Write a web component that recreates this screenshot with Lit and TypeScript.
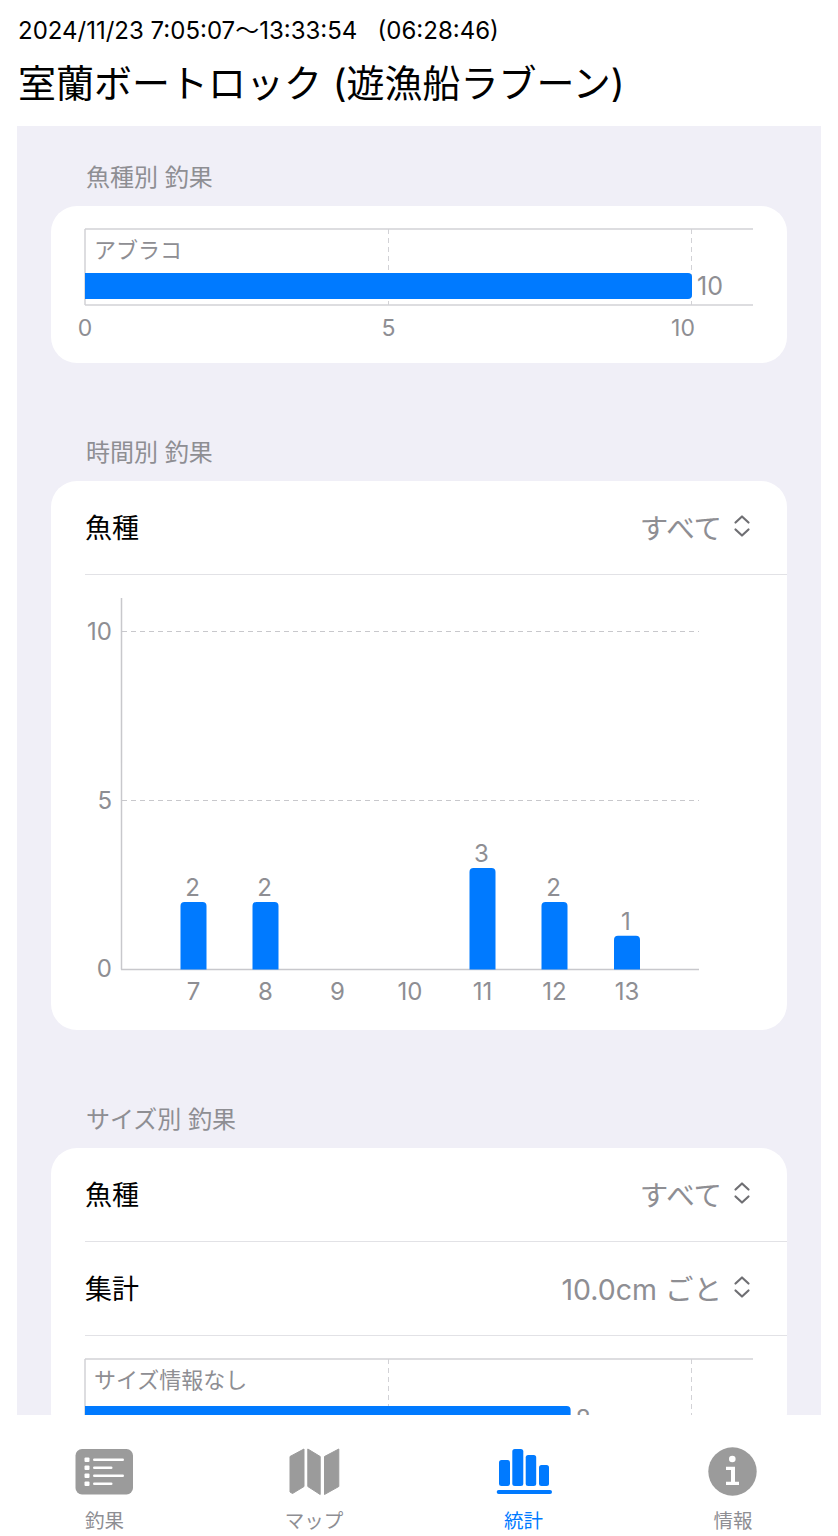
import {LitElement, css, html, svg} from 'lit';
import {customElement} from 'lit/decorators.js';

const BLUE = '#007aff';

const hourBars = [
    {label: '7', x: 142.5, value: 2},
    {label: '8', x: 214.5, value: 2},
    {label: '9', x: 286.5, value: 0},
    {label: '10', x: 359, value: 0},
    {label: '11', x: 431.5, value: 3},
    {label: '12', x: 503.5, value: 2},
    {label: '13', x: 576, value: 1},
];

const chevrons = html`
    <svg width="18" height="26" viewBox="0 0 18 26" fill="none" stroke="#6f6f73" stroke-width="2.2"
         stroke-linecap="round" stroke-linejoin="round">
        <path d="M2.5 9.5 9 3.5l6.5 6"/>
        <path d="M2.5 16.5 9 22.5l6.5-6"/>
    </svg>`;

@customElement('hbar-chart')
export class HBarChart extends LitElement {
    static properties = {
        label: {type: String},
        value: {type: Number},
        barTop: {type: Number},
        axis: {type: Boolean},
    };

    declare label: string;
    declare value: number;
    declare barTop: number;
    declare axis: boolean;

    static styles = css`
        :host {
            display: block;
        }

        svg {
            display: block;
        }

        text {
            font-family: Inter, "Noto Sans CJK JP", sans-serif;
            font-size: 22px;
            fill: #8e8e93;
        }

        text.val {
            font-size: 25px;
        }

        text.tick {
            font-size: 23px;
        }
    `;

    constructor() {
        super();
        this.barTop = 45;
        this.axis = false;
    }

    render() {
        const top = this.barTop;
        const bottom = top + 32;
        const end = 34 + this.value * 60.7;
        return html`
            <svg width="736" height="${bottom + (this.axis ? 57 : 0)}">
                <path d="M34 1H702M34 ${bottom}H702M34 1V${bottom}" stroke="#d2d2d6" stroke-width="1.5" fill="none"/>
                <path d="M337.5 1V${bottom}M640.5 1V${bottom}" stroke="#d2d2d6" stroke-dasharray="5 4"/>
                <text x="43" y="30">${this.label}</text>
                <path d="M34 ${top}H${end - 4}a4 4 0 0 1 4 4V${top + 22}a4 4 0 0 1-4 4H34Z" fill="${BLUE}"/>
                <text class="val" x="${end + 5}" y="${top + 22}">${this.value}</text>
                ${this.axis
                    ? svg`
                        <text class="tick" x="34" y="108" text-anchor="middle">0</text>
                        <text class="tick" x="337.5" y="108" text-anchor="middle">5</text>
                        <text class="tick" x="632" y="108" text-anchor="middle">10</text>`
                    : ''}
            </svg>`;
    }
}

@customElement('app-root')
export class AppRoot extends LitElement {
    static styles = css`
        :host {
            display: block;
            font-family: Inter, "Noto Sans CJK JP", sans-serif;
            background: #fff;
            color: #000;
        }

        .page {
            display: flex;
            flex-direction: column;
            height: 1536px;
            overflow: hidden;
        }

        .head {
            flex: none;
            height: 126px;
            padding: 17px 18px 0;
            box-sizing: border-box;
        }

        .date {
            font-size: 24px;
            line-height: 28px;
            white-space: pre;
        }

        .title {
            font-size: 38px;
            line-height: 50px;
            margin-top: 13px;
            white-space: nowrap;
        }

        .panel {
            flex: 1;
            min-height: 0;
            overflow: hidden;
            margin: 0 17px;
            padding: 37px 34px 0;
            background: #f0eff7;
        }

        .section-title {
            font-size: 24px;
            line-height: 30px;
            color: #8e8e93;
            padding-left: 35px;
        }

        .card {
            background: #fff;
            border-radius: 26px;
            margin-top: 13px;
            margin-bottom: 75px;
            overflow: hidden;
        }

        .first {
            height: 157px;
            padding-top: 22px;
            box-sizing: border-box;
        }

        .row {
            display: flex;
            align-items: center;
            justify-content: space-between;
            height: 94px;
            box-sizing: border-box;
            margin-left: 34px;
            padding: 0 36px 3px 0;
            font-size: 27px;
            border-bottom: 1.5px solid #e2e2e6;
        }

        .value {
            display: flex;
            align-items: center;
            gap: 11px;
            font-size: 28.5px;
            color: #8e8e93;
        }

        .chart {
            display: block;
        }

        .chart text {
            font-family: Inter, sans-serif;
            font-size: 24px;
            fill: #8e8e93;
        }

        .size-chart {
            padding-top: 22px;
        }

        .tabbar {
            flex: none;
            height: 121px;
            display: grid;
            grid-template-columns: 209px 210px 209px 210px;
            background: #fff;
        }

        .tab {
            display: flex;
            flex-direction: column;
            align-items: center;
            padding-top: 32px;
            font-size: 19.5px;
            color: #8e8e93;
        }

        .tab.active {
            color: #007aff;
        }

        .tab svg {
            display: block;
        }

        .tab span {
            margin-top: 10px;
            line-height: 24px;
        }
    `;

    renderHourChart() {
        const unit = 33.8;
        const base = 394.5;
        return html`
            <svg class="chart" width="736" height="455">
                <path d="M70.5 23V${base}M70 ${base}H648" stroke="#c8c8cc" stroke-width="1.5" fill="none"/>
                <path d="M71 56.5H648M71 225.5H648" stroke="#c8c8cc" stroke-dasharray="5 4"/>
                <text x="61" y="65" text-anchor="end">10</text>
                <text x="61" y="234" text-anchor="end">5</text>
                <text x="61" y="402" text-anchor="end">0</text>
                ${hourBars.map((b) => {
                    const h = b.value * unit;
                    return svg`
                        ${b.value
                            ? svg`<path d="M${b.x - 13} ${base}V${base - h + 4}a4 4 0 0 1 4-4h18a4 4 0 0 1 4 4V${base}Z" fill="${BLUE}"/>
                                  <text x="${b.x - 1}" y="${base - h - 6}" text-anchor="middle">${b.value}</text>`
                            : ''}
                        <text x="${b.x}" y="425" text-anchor="middle">${b.label}</text>`;
                })}
            </svg>`;
    }

    renderTabs() {
        return html`
            <nav class="tabbar">
                <div class="tab">
                    <svg width="60" height="52" viewBox="0 0 60 52">
                        <rect x="0.5" y="2" width="57.5" height="45.5" rx="6.5" fill="#9b9b9b"/>
                        <g fill="#fff">
                            <rect x="9.5" y="10.5" width="5" height="4.5" rx="1"/>
                            <rect x="9.5" y="18.5" width="5" height="4.5" rx="1"/>
                            <rect x="9.5" y="26.5" width="5" height="4.5" rx="1"/>
                            <rect x="9.5" y="34.5" width="5" height="4.5" rx="1"/>
                            <rect x="18" y="11.5" width="31" height="2.6" rx="1.3"/>
                            <rect x="18" y="19.5" width="19.5" height="2.6" rx="1.3"/>
                            <rect x="18" y="27.5" width="31" height="2.6" rx="1.3"/>
                            <rect x="18" y="35.5" width="19.5" height="2.6" rx="1.3"/>
                        </g>
                    </svg>
                    <span>釣果</span>
                </div>
                <div class="tab">
                    <svg width="52" height="52" viewBox="0 0 52 52" fill="#9b9b9b" stroke="#9b9b9b" stroke-width="1"
                         stroke-linejoin="round">
                        <path d="M2 9.5 16 2v37.5L4.5 46.5 2 45Z"/>
                        <path d="M19.8 2 32.2 9.5v38l-12.4-8Z"/>
                        <path d="M36.5 9.5 50.8 2v37.5L36.5 47.5Z"/>
                    </svg>
                    <span>マップ</span>
                </div>
                <div class="tab active">
                    <svg width="58" height="52" viewBox="0 0 58 52" fill="${BLUE}">
                        <rect x="4" y="13" width="11" height="26" rx="2.5"/>
                        <rect x="17.3" y="2" width="11" height="37" rx="2.5"/>
                        <rect x="30.7" y="8" width="10.5" height="31" rx="2.5"/>
                        <rect x="44" y="18" width="10" height="21" rx="2.5"/>
                        <rect x="1.7" y="43" width="55.3" height="4" rx="2"/>
                    </svg>
                    <span>統計</span>
                </div>
                <div class="tab">
                    <svg width="52" height="52" viewBox="0 0 52 52">
                        <circle cx="25.5" cy="24.5" r="24.2" fill="#9b9b9b"/>
                        <circle cx="25.3" cy="12" r="3.3" fill="#fff"/>
                        <path d="M19 19.7H28V34.7H32V38H19V34.7H24V23H19Z" fill="#fff"/>
                    </svg>
                    <span>情報</span>
                </div>
            </nav>`;
    }

    render() {
        return html`
            <div class="page">
                <header class="head">
                    <div class="date">2024/11/23 7:05:07～13:33:54   (06:28:46)</div>
                    <div class="title">室蘭ボートロック (遊漁船ラブーン)</div>
                </header>
                <main class="panel">
                    <div class="section-title">魚種別 釣果</div>
                    <section class="card first">
                        <hbar-chart label="アブラコ" .value=${10} axis></hbar-chart>
                    </section>

                    <div class="section-title">時間別 釣果</div>
                    <section class="card">
                        <div class="row"><span>魚種</span><span class="value">すべて ${chevrons}</span></div>
                        ${this.renderHourChart()}
                    </section>

                    <div class="section-title">サイズ別 釣果</div>
                    <section class="card">
                        <div class="row"><span>魚種</span><span class="value">すべて ${chevrons}</span></div>
                        <div class="row"><span>集計</span><span class="value">10.0cm ごと ${chevrons}</span></div>
                        <div class="size-chart">
                            <hbar-chart label="サイズ情報なし" .value=${8} .barTop=${48}></hbar-chart>
                        </div>
                    </section>
                </main>
                ${this.renderTabs()}
            </div>`;
    }
}
